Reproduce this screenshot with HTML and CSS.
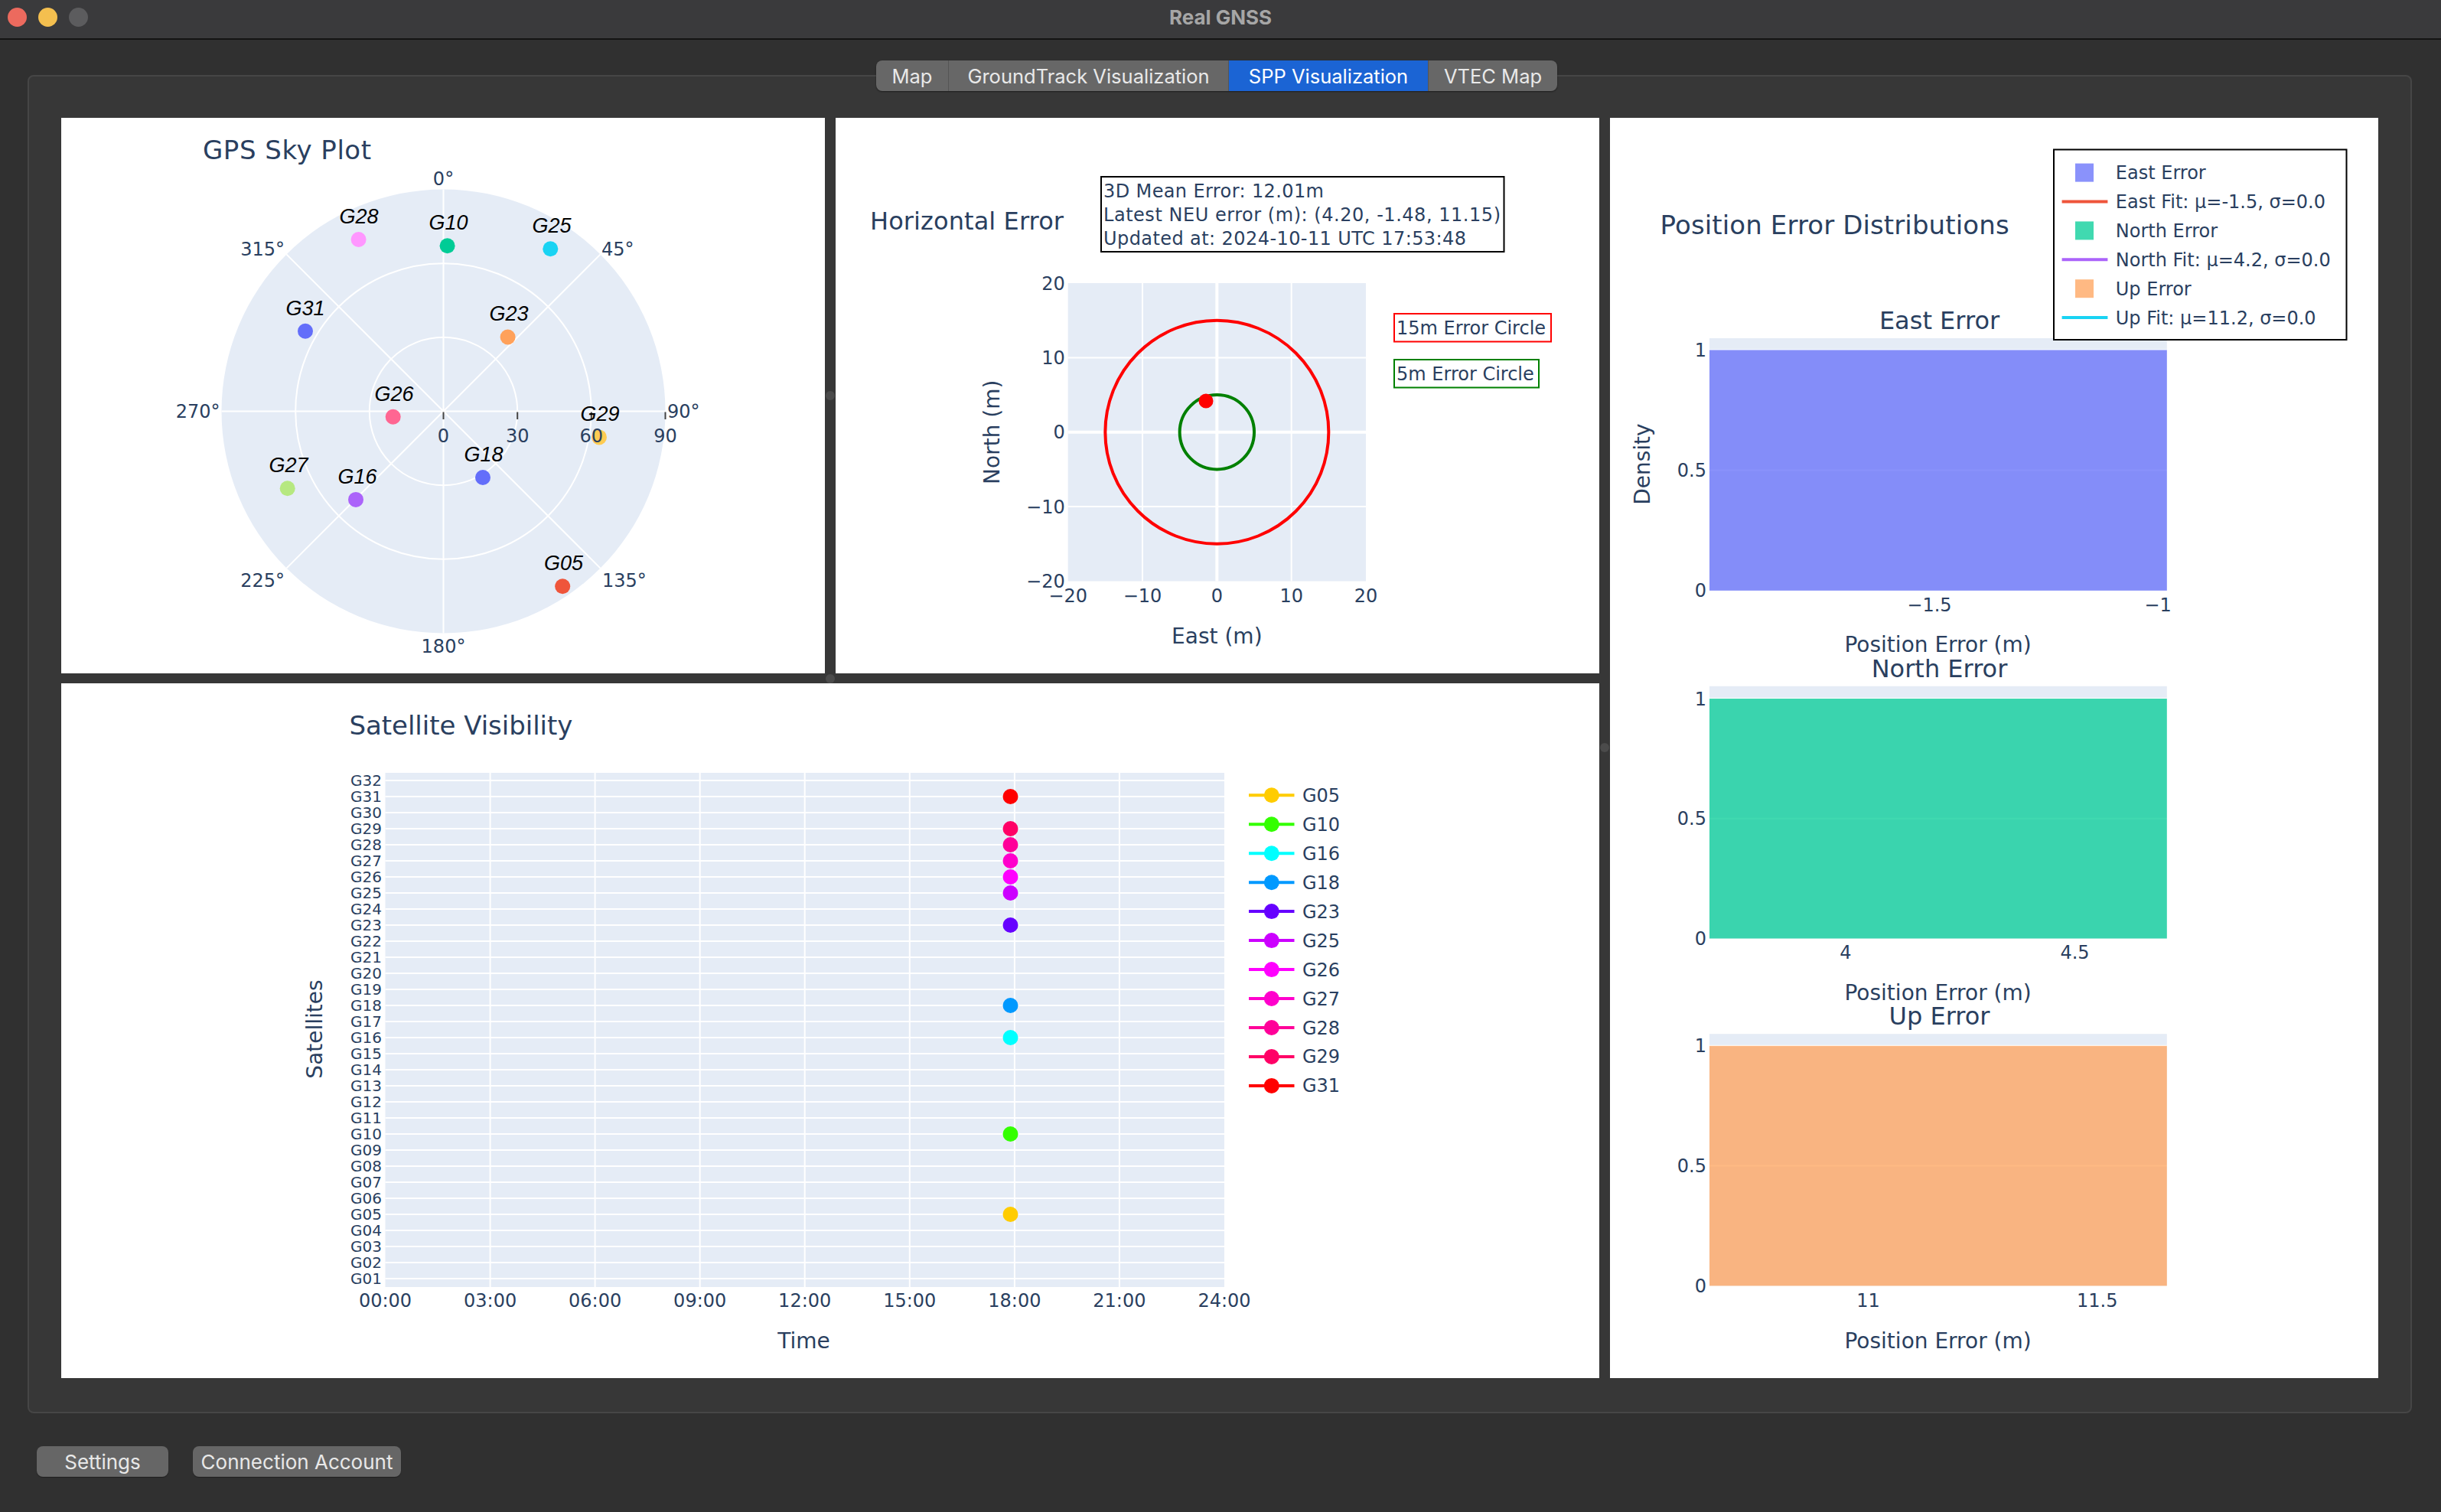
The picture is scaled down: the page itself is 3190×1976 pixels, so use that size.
FILE: index.html
```html
<!DOCTYPE html>
<html lang="en">
<head>
<meta charset="utf-8">
<title>Real GNSS</title>
<link rel="stylesheet" href="styles.css">
</head>
<body>
<div class="window">
  <header class="titlebar">
    <div class="lights">
      <span class="light red"></span><span class="light yellow"></span><span class="light gray"></span>
    </div>
    <div class="title">Real GNSS</div>
    <div></div>
  </header>

  <nav class="tabs">
    <div class="tab-group">
      <span class="tab tab-map">Map</span>
      <span class="tab tab-ground">GroundTrack Visualization</span>
      <span class="tab tab-spp active">SPP Visualization</span>
      <span class="tab tab-vtec">VTEC Map</span>
    </div>
  </nav>

  <section class="pane">
    <div class="grid">
      <!-- Sky plot -->
      <div class="panel sky">
        <svg viewBox="0 0 998 726" xmlns="http://www.w3.org/2000/svg">
          <text class="t t34" x="185" y="54" textLength="220">GPS Sky Plot</text>
          <circle cx="499.5" cy="383.5" r="290" fill="#E5ECF6"/>
          <g class="grid-w">
            <circle cx="499.5" cy="383.5" r="96.7" fill="none"/>
            <circle cx="499.5" cy="383.5" r="193.3" fill="none"/>
            <path d="M499.5 93.5V673.5M209.5 383.5H789.5M704.6 178.4L294.4 588.6M294.4 178.4L704.6 588.6"/>
          </g>
          <path class="tick" d="M499.5 384.5V394M596.2 384.5V394M692.8 384.5V394M789.5 384.5V394"/>
          <g class="t t24">
            <text class="mid" x="499.5" y="87.8">0°</text>
            <text x="706" y="180">45°</text>
            <text x="792" y="392">90°</text>
            <text x="707" y="612.8">135°</text>
            <text class="mid" x="499.5" y="698.6">180°</text>
            <text class="end" x="292" y="612.8">225°</text>
            <text class="end" x="207.5" y="392">270°</text>
            <text class="end" x="292" y="180">315°</text>
          </g>
          <g>
            <circle cx="388.6" cy="159" r="10" fill="#FF97FF"/>
            <circle cx="504.6" cy="167.3" r="10" fill="#00CC96"/>
            <circle cx="639.3" cy="171.2" r="10" fill="#19D3F3"/>
            <circle cx="583.6" cy="286.5" r="10" fill="#FFA15A"/>
            <circle cx="319" cy="278.8" r="10" fill="#636EFA"/>
            <circle cx="433.7" cy="390.7" r="10" fill="#FF6692"/>
            <circle cx="703" cy="417.4" r="10" fill="#FECB52"/>
            <circle cx="551" cy="470" r="10" fill="#636EFA"/>
            <circle cx="295.7" cy="484.3" r="10" fill="#B6E880"/>
            <circle cx="385" cy="498.9" r="10" fill="#AB63FA"/>
            <circle cx="655.2" cy="612.3" r="10" fill="#EF553B"/>
          </g>
          <g class="t t24">
            <text class="mid" x="499.5" y="423.7">0</text>
            <text class="mid" x="596.2" y="423.7">30</text>
            <text class="mid" x="692.8" y="423.7">60</text>
            <text class="mid" x="789.5" y="423.7">90</text>
          </g>
          <g class="sat">
            <text x="389" y="138">G28</text>
            <text x="506" y="146">G10</text>
            <text x="641" y="150">G25</text>
            <text x="585" y="265">G23</text>
            <text x="319" y="258">G31</text>
            <text x="435" y="370">G26</text>
            <text x="704" y="396">G29</text>
            <text x="552" y="449">G18</text>
            <text x="297" y="463">G27</text>
            <text x="387" y="478">G16</text>
            <text x="656.5" y="591">G05</text>
          </g>
        </svg>
      </div>

      <!-- Horizontal error -->
      <div class="panel herr">
        <svg viewBox="0 0 998 726" xmlns="http://www.w3.org/2000/svg">
          <text class="t t32" x="45" y="146" textLength="253">Horizontal Error</text>
          <rect x="347" y="77" width="526.5" height="98" fill="#fff" stroke="#000" stroke-width="2"/>
          <g class="t t24">
            <text x="350" y="104" textLength="288">3D Mean Error: 12.01m</text>
            <text x="350" y="135" textLength="519">Latest NEU error (m): (4.20, -1.48, 11.15)</text>
            <text x="350" y="166" textLength="474">Updated at: 2024-10-11 UTC 17:53:48</text>
          </g>
          <rect x="303.7" y="216" width="389.3" height="389.5" fill="#E5ECF6"/>
          <path class="grid-w" d="M401 216V605.5M595.7 216V605.5M303.7 313.4H693M303.7 508H693"/>
          <path class="zero-w" d="M498.35 216V605.5M303.7 410.75H693"/>
          <circle cx="498.35" cy="410.75" r="146" fill="none" stroke="#ff0000" stroke-width="4"/>
          <circle cx="498.35" cy="410.75" r="48.7" fill="none" stroke="#008000" stroke-width="4"/>
          <circle cx="484" cy="370" r="9.5" fill="#ff0000"/>
          <g class="t t24">
            <text class="mid" x="303.7" y="632.5">−20</text>
            <text class="mid" x="401" y="632.5">−10</text>
            <text class="mid" x="498.35" y="632.5">0</text>
            <text class="mid" x="595.7" y="632.5">10</text>
            <text class="mid" x="693" y="632.5">20</text>
            <text class="end" x="299.7" y="224.5">20</text>
            <text class="end" x="299.7" y="321.9">10</text>
            <text class="end" x="299.7" y="419.3">0</text>
            <text class="end" x="299.7" y="516.5">−10</text>
            <text class="end" x="299.7" y="614">−20</text>
          </g>
          <text class="t t28 mid" x="498.35" y="686.7">East (m)</text>
          <text class="t t28 mid" transform="translate(203.6 410.75) rotate(-90)" y="10">North (m)</text>
          <rect x="730" y="256" width="205" height="36.5" fill="#fff" stroke="#ff0000" stroke-width="2"/>
          <text class="t t24" x="733" y="283">15m Error Circle</text>
          <rect x="730" y="316" width="189" height="36.5" fill="#fff" stroke="#008000" stroke-width="2"/>
          <text class="t t24" x="733" y="343">5m Error Circle</text>
        </svg>
      </div>

      <!-- Distributions -->
      <div class="panel dist">
        <svg viewBox="0 0 1004 1647" xmlns="http://www.w3.org/2000/svg">
          <text class="t t34" x="65.6" y="151.6" textLength="456">Position Error Distributions</text>

          <text class="t t32 mid" x="430.5" y="276">East Error</text>
          <rect x="130" y="288" width="597.8" height="329.8" fill="#E5ECF6"/>
          <path class="grid-w" d="M130 303.4H727.8M130 460.6H727.8"/>
          <rect x="130" y="303.4" width="597.8" height="314.4" fill="#636EFA" fill-opacity="0.75"/>
          <g class="t t24">
            <text class="end" x="126" y="311.9">1</text>
            <text class="end" x="126" y="469.1">0.5</text>
            <text class="end" x="126" y="626.3">0</text>
            <text class="mid" x="417.5" y="645.2">−1.5</text>
            <text class="mid" x="716" y="645.2">−1</text>
          </g>
          <text class="t t28 mid" x="428.6" y="698.4">Position Error (m)</text>

          <text class="t t32 mid" x="430.5" y="730.8">North Error</text>
          <rect x="130" y="742.8" width="597.8" height="329.7" fill="#E5ECF6"/>
          <path class="grid-w" d="M130 759H727.8M130 915.8H727.8"/>
          <rect x="130" y="759" width="597.8" height="313.5" fill="#00CC96" fill-opacity="0.75"/>
          <g class="t t24">
            <text class="end" x="126" y="767.5">1</text>
            <text class="end" x="126" y="924.3">0.5</text>
            <text class="end" x="126" y="1081">0</text>
            <text class="mid" x="308" y="1098.5">4</text>
            <text class="mid" x="607.5" y="1098.5">4.5</text>
          </g>
          <text class="t t28 mid" x="428.6" y="1152.7">Position Error (m)</text>

          <text class="t t32 mid" x="430.5" y="1185.2">Up Error</text>
          <rect x="130" y="1197.2" width="597.8" height="329.2" fill="#E5ECF6"/>
          <path class="grid-w" d="M130 1212.8H727.8M130 1369.6H727.8"/>
          <rect x="130" y="1212.8" width="597.8" height="313.6" fill="#FFA15A" fill-opacity="0.75"/>
          <g class="t t24">
            <text class="end" x="126" y="1221.3">1</text>
            <text class="end" x="126" y="1378.1">0.5</text>
            <text class="end" x="126" y="1534.9">0</text>
            <text class="mid" x="337.5" y="1554">11</text>
            <text class="mid" x="636.7" y="1554">11.5</text>
          </g>
          <text class="t t28 mid" x="428.6" y="1608.3">Position Error (m)</text>

          <text class="t t28 mid" transform="translate(41.5 452.6) rotate(-90)" y="10">Density</text>

          <rect x="580" y="41.5" width="382.5" height="248.5" fill="#fff" stroke="#000" stroke-width="2"/>
          <rect x="608" y="59.6" width="24" height="24" fill="#636EFA" fill-opacity="0.75"/>
          <path d="M590.6 109.5H650.4" stroke="#EF553B" stroke-width="4"/>
          <rect x="608" y="135.4" width="24" height="24" fill="#00CC96" fill-opacity="0.75"/>
          <path d="M590.6 185.3H650.4" stroke="#AB63FA" stroke-width="4"/>
          <rect x="608" y="211.2" width="24" height="24" fill="#FFA15A" fill-opacity="0.75"/>
          <path d="M590.6 261.1H650.4" stroke="#19D3F3" stroke-width="4"/>
          <g class="t t24">
            <text x="660.8" y="80.1">East Error</text>
            <text x="660.8" y="118">East Fit: μ=-1.5, σ=0.0</text>
            <text x="660.8" y="155.9">North Error</text>
            <text x="660.8" y="193.8">North Fit: μ=4.2, σ=0.0</text>
            <text x="660.8" y="231.7">Up Error</text>
            <text x="660.8" y="269.6">Up Fit: μ=11.2, σ=0.0</text>
          </g>
        </svg>
      </div>

      <!-- Satellite visibility -->
      <div class="panel vis">
        <svg viewBox="0 0 2010 908" xmlns="http://www.w3.org/2000/svg">
          <text class="t t34" x="376.4" y="67.3" textLength="292">Satellite Visibility</text>
          <rect x="423.5" y="117" width="1096.5" height="672" fill="#E5ECF6"/>
          <path class="grid-w" d="M423.5 778H1520M423.5 757H1520M423.5 736H1520M423.5 715H1520M423.5 694H1520M423.5 673H1520M423.5 652H1520M423.5 631H1520M423.5 610H1520M423.5 589H1520M423.5 568H1520M423.5 547H1520M423.5 526H1520M423.5 505H1520M423.5 484H1520M423.5 463H1520M423.5 442H1520M423.5 421H1520M423.5 400H1520M423.5 379H1520M423.5 358H1520M423.5 337H1520M423.5 316H1520M423.5 295H1520M423.5 274H1520M423.5 253H1520M423.5 232H1520M423.5 211H1520M423.5 190H1520M423.5 169H1520M423.5 148H1520M423.5 127H1520M560.6 117V789M697.6 117V789M834.7 117V789M971.7 117V789M1108.8 117V789M1245.9 117V789M1382.9 117V789"/>
          <g class="t t20">
            <text class="end" x="419" y="785">G01</text>
            <text class="end" x="419" y="764">G02</text>
            <text class="end" x="419" y="743">G03</text>
            <text class="end" x="419" y="722">G04</text>
            <text class="end" x="419" y="701">G05</text>
            <text class="end" x="419" y="680">G06</text>
            <text class="end" x="419" y="659">G07</text>
            <text class="end" x="419" y="638">G08</text>
            <text class="end" x="419" y="617">G09</text>
            <text class="end" x="419" y="596">G10</text>
            <text class="end" x="419" y="575">G11</text>
            <text class="end" x="419" y="554">G12</text>
            <text class="end" x="419" y="533">G13</text>
            <text class="end" x="419" y="512">G14</text>
            <text class="end" x="419" y="491">G15</text>
            <text class="end" x="419" y="470">G16</text>
            <text class="end" x="419" y="449">G17</text>
            <text class="end" x="419" y="428">G18</text>
            <text class="end" x="419" y="407">G19</text>
            <text class="end" x="419" y="386">G20</text>
            <text class="end" x="419" y="365">G21</text>
            <text class="end" x="419" y="344">G22</text>
            <text class="end" x="419" y="323">G23</text>
            <text class="end" x="419" y="302">G24</text>
            <text class="end" x="419" y="281">G25</text>
            <text class="end" x="419" y="260">G26</text>
            <text class="end" x="419" y="239">G27</text>
            <text class="end" x="419" y="218">G28</text>
            <text class="end" x="419" y="197">G29</text>
            <text class="end" x="419" y="176">G30</text>
            <text class="end" x="419" y="155">G31</text>
            <text class="end" x="419" y="134">G32</text>
          </g>
          <g class="t t24">
            <text class="mid" x="423.5" y="814.5">00:00</text>
            <text class="mid" x="560.6" y="814.5">03:00</text>
            <text class="mid" x="697.6" y="814.5">06:00</text>
            <text class="mid" x="834.7" y="814.5">09:00</text>
            <text class="mid" x="971.7" y="814.5">12:00</text>
            <text class="mid" x="1108.8" y="814.5">15:00</text>
            <text class="mid" x="1245.9" y="814.5">18:00</text>
            <text class="mid" x="1382.9" y="814.5">21:00</text>
            <text class="mid" x="1520" y="814.5">24:00</text>
          </g>
          <text class="t t28 mid" x="970.5" y="869">Time</text>
          <text class="t t28 mid" transform="translate(330.5 452) rotate(-90)" y="10">Satellites</text>
          <g>
            <circle cx="1240.5" cy="148" r="10" fill="#FF0000"/>
            <circle cx="1240.5" cy="190" r="10" fill="#FF0066"/>
            <circle cx="1240.5" cy="211" r="10" fill="#FF0099"/>
            <circle cx="1240.5" cy="232" r="10" fill="#FF00CC"/>
            <circle cx="1240.5" cy="253" r="10" fill="#FF00FF"/>
            <circle cx="1240.5" cy="274" r="10" fill="#CC00FF"/>
            <circle cx="1240.5" cy="316" r="10" fill="#6600FF"/>
            <circle cx="1240.5" cy="421" r="10" fill="#0099FF"/>
            <circle cx="1240.5" cy="463" r="10" fill="#00FFFF"/>
            <circle cx="1240.5" cy="589" r="10" fill="#33FF00"/>
            <circle cx="1240.5" cy="694" r="10" fill="#FFCC00"/>
          </g>
          <g class="legend">
            <g stroke="#FFCC00" fill="#FFCC00"><path d="M1552 146.3H1611.5"/><circle cx="1581.8" cy="146.3" r="10" stroke="none"/></g>
            <g stroke="#33FF00" fill="#33FF00"><path d="M1552 184.3H1611.5"/><circle cx="1581.8" cy="184.3" r="10" stroke="none"/></g>
            <g stroke="#00FFFF" fill="#00FFFF"><path d="M1552 222.2H1611.5"/><circle cx="1581.8" cy="222.2" r="10" stroke="none"/></g>
            <g stroke="#0099FF" fill="#0099FF"><path d="M1552 260.2H1611.5"/><circle cx="1581.8" cy="260.2" r="10" stroke="none"/></g>
            <g stroke="#6600FF" fill="#6600FF"><path d="M1552 298.1H1611.5"/><circle cx="1581.8" cy="298.1" r="10" stroke="none"/></g>
            <g stroke="#CC00FF" fill="#CC00FF"><path d="M1552 336.1H1611.5"/><circle cx="1581.8" cy="336.1" r="10" stroke="none"/></g>
            <g stroke="#FF00FF" fill="#FF00FF"><path d="M1552 374.1H1611.5"/><circle cx="1581.8" cy="374.1" r="10" stroke="none"/></g>
            <g stroke="#FF00CC" fill="#FF00CC"><path d="M1552 412H1611.5"/><circle cx="1581.8" cy="412" r="10" stroke="none"/></g>
            <g stroke="#FF0099" fill="#FF0099"><path d="M1552 450H1611.5"/><circle cx="1581.8" cy="450" r="10" stroke="none"/></g>
            <g stroke="#FF0066" fill="#FF0066"><path d="M1552 487.9H1611.5"/><circle cx="1581.8" cy="487.9" r="10" stroke="none"/></g>
            <g stroke="#FF0000" fill="#FF0000"><path d="M1552 525.9H1611.5"/><circle cx="1581.8" cy="525.9" r="10" stroke="none"/></g>
          </g>
          <g class="t t24">
            <text x="1622" y="154.8">G05</text>
            <text x="1622" y="192.8">G10</text>
            <text x="1622" y="230.7">G16</text>
            <text x="1622" y="268.7">G18</text>
            <text x="1622" y="306.6">G23</text>
            <text x="1622" y="344.6">G25</text>
            <text x="1622" y="382.6">G26</text>
            <text x="1622" y="420.5">G27</text>
            <text x="1622" y="458.5">G28</text>
            <text x="1622" y="496.4">G29</text>
            <text x="1622" y="534.4">G31</text>
          </g>
        </svg>
      </div>

      <span class="handle handle-v1"></span>
      <span class="handle handle-h"></span>
      <span class="handle handle-v2"></span>
    </div>
  </section>

  <footer class="footer">
    <button class="btn btn-settings">Settings</button>
    <button class="btn btn-account">Connection Account</button>
  </footer>
</div>
</body>
</html>
```

FILE: styles.css
```css
* { box-sizing: border-box; }

html, body {
  margin: 0;
  padding: 0;
}

body {
  width: 3190px;
  height: 1976px;
  overflow: hidden;
  background: #303030;
  font-family: Inter, "Liberation Sans", Arial, sans-serif;
}

.window {
  width: 3190px;
  height: 1976px;
}

/* ---------- title bar ---------- */
.titlebar {
  height: 52px;
  background: #3a3a3c;
  border-bottom: 2px solid #141414;
  display: grid;
  grid-template-columns: 1fr auto 1fr;
  align-items: center;
  padding-bottom: 6px;
}

.lights {
  display: flex;
  gap: 15px;
  padding-left: 10px;
}

.light {
  width: 25px;
  height: 25px;
  border-radius: 50%;
}

.light.red { background: #ec6a5e; }
.light.yellow { background: #f4bf4f; }
.light.gray { background: #5c5c5e; }

.title {
  color: #a6a6a6;
  font-size: 26px;
  font-weight: 700;
}

/* ---------- tabs ---------- */
.tabs {
  position: relative;
  z-index: 1;
  display: flex;
  justify-content: center;
  margin-top: 27px;
  margin-bottom: -21px;
  padding-right: 10px;
}

.tab-group {
  display: flex;
  height: 40px;
  border-radius: 8px;
  overflow: hidden;
  background: #676767;
  box-shadow: 0 1px 2px rgba(0, 0, 0, 0.45);
}

.tab {
  display: flex;
  align-items: center;
  justify-content: center;
  color: #e9e9e9;
  font-size: 25.5px;
  border-left: 1px solid #555555;
  white-space: nowrap;
}

.tab:first-child { border-left: none; }
.tab-map { width: 94px; }
.tab-ground { width: 366px; }
.tab-spp { width: 261px; }
.tab-vtec { width: 169px; }

.tab.active {
  background: #1b64d4;
  color: #ffffff;
}

/* ---------- pane ---------- */
.pane {
  margin: 0 38px 0 36px;
  border: 2px solid #464646;
  border-radius: 8px;
  background: #373737;
  padding: 54px 42px 44px;
}

.grid {
  position: relative;
  display: grid;
  grid-template-columns: 998px 998px 1004px;
  grid-template-rows: 726px 908px;
  column-gap: 14px;
  row-gap: 13px;
}

.panel {
  background: #ffffff;
  overflow: hidden;
}

.panel svg {
  display: block;
  width: 100%;
  height: 100%;
}

.sky { grid-column: 1; grid-row: 1; }
.herr { grid-column: 2; grid-row: 1; }
.dist { grid-column: 3; grid-row: 1 / span 2; }
.vis { grid-column: 1 / span 2; grid-row: 2; }

.handle {
  position: absolute;
  width: 12px;
  height: 12px;
  border-radius: 50%;
  background: #4b4b4b;
}

.handle-v1 { left: 999px; top: 357px; }
.handle-h { left: 999px; top: 727px; }
.handle-v2 { left: 2011px; top: 817px; }

/* ---------- footer ---------- */
.footer {
  display: flex;
  gap: 32px;
  margin-top: 43px;
  padding-left: 48px;
}

.btn {
  height: 40px;
  border: none;
  border-radius: 8px;
  background: #666666;
  color: #e8e8e8;
  font-family: inherit;
  font-size: 26px;
  display: flex;
  align-items: center;
  justify-content: center;
  padding: 0;
  box-shadow: 0 1px 1px rgba(0, 0, 0, 0.35);
}

.btn-settings { width: 172px; }
.btn-account { width: 272px; }

/* ---------- chart text ---------- */
.t {
  font-family: "DejaVu Sans", Verdana, sans-serif;
  fill: #2a3f5f;
}

.t20 { font-size: 20px; }
.t24 { font-size: 24px; }
.t28 { font-size: 28px; }
.t32 { font-size: 32px; }
.t34 { font-size: 34px; }

.mid { text-anchor: middle; }
.end { text-anchor: end; }

.sat {
  font-family: "Liberation Sans", Arial, sans-serif;
  font-style: italic;
  font-size: 27px;
  fill: #000000;
  text-anchor: middle;
}

.grid-w {
  stroke: #ffffff;
  stroke-width: 2;
  fill: none;
}

.zero-w {
  stroke: #ffffff;
  stroke-width: 4;
  fill: none;
}

.tick {
  stroke: #444444;
  stroke-width: 2;
  fill: none;
}

.legend path {
  stroke-width: 4;
}
```
